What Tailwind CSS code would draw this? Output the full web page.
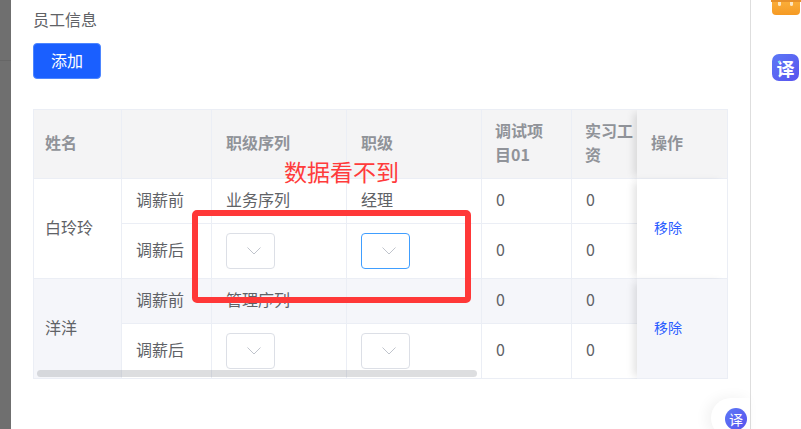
<!DOCTYPE html>
<html lang="zh-CN">
<head>
    <meta charset="UTF-8">
    <title>员工信息</title>
    <script src="https://cdn.jsdelivr.net/npm/@tailwindcss/browser@4"></script>
</head>
<body class="bg-white overflow-hidden font-['Noto_Sans_CJK_SC','Noto_Sans',sans-serif] text-[#606266]">
    <div class="relative flex w-[801px] h-[429px] overflow-hidden">
        <!-- dimmed page behind the drawer -->
        <div class="w-[11px] h-full bg-[#6f6f6f] shrink-0">
            <div class="mt-[60px] h-px bg-[#666666]"></div>
        </div>

        <!-- drawer -->
        <main class="w-[739px] shrink-0 pl-[22px] pt-[7px]">
            <div class="h-6 text-base leading-6">员工信息</div>
            <button class="mt-3 block w-[68px] h-9 pb-[3px] rounded bg-[#1a5fff] border border-[#4d86ff] text-white text-base">添加</button>

            <div class="relative mt-[30px] w-[695px] border-t border-l border-[#ebeef5] overflow-hidden">
                <table class="w-[694px] table-fixed border-separate border-spacing-0 text-base [&_td]:pb-1 [&_th]:pb-1">
                    <colgroup>
                        <col class="w-[88px]"><col class="w-[90px]"><col class="w-[135px]"><col class="w-[135px]"><col class="w-[90px]"><col class="w-[65px]"><col class="w-[91px]">
                    </colgroup>
                    <thead>
                        <tr class="h-[69px] bg-[#f4f4f5] text-[#909399] font-bold leading-6 text-left">
                            <th class="pl-[11px] border-r border-b border-[#ebeef5]">姓名</th>
                            <th class="border-r border-b border-[#ebeef5]"></th>
                            <th class="pl-3.5 border-r border-b border-[#ebeef5]">职级序列</th>
                            <th class="pl-3.5 border-r border-b border-[#ebeef5]">职级</th>
                            <th class="pl-[13px] pr-4 border-r border-b border-[#ebeef5]">调试项目01</th>
                            <th class="pl-[13px] border-b border-[#ebeef5] whitespace-nowrap overflow-hidden font-bold">实习工<br>资</th>
                            <th class="relative pl-3.5 border-r border-b border-[#ebeef5] shadow-[-6px_0_8px_-3px_rgba(0,0,0,0.12)]">操作</th>
                        </tr>
                    </thead>
                    <tbody>
                        <tr class="h-[45px]">
                            <td rowspan="2" class="pl-[11px] border-r border-b border-[#ebeef5]">白玲玲</td>
                            <td class="pl-3.5 border-r border-b border-[#ebeef5]">调薪前</td>
                            <td class="pl-3.5 border-r border-b border-[#ebeef5]">业务序列</td>
                            <td class="pl-3.5 border-r border-b border-[#ebeef5]">经理</td>
                            <td class="pl-3.5 border-r border-b border-[#ebeef5]">0</td>
                            <td class="pl-3.5 border-b border-[#ebeef5]">0</td>
                            <td rowspan="2" class="relative pl-[17px] border-r border-b border-[#ebeef5] text-sm text-[#2a5cff] bg-white shadow-[-6px_0_8px_-3px_rgba(0,0,0,0.12)]">移除</td>
                        </tr>
                        <tr class="h-[55px]">
                            <td class="pl-3.5 border-r border-b border-[#ebeef5]">调薪后</td>
                            <td class="pl-3.5 !pb-0 border-r border-b border-[#ebeef5]">
                                <div class="flex items-center justify-center pl-1.5 w-[49px] h-9 rounded border border-[#dcdfe6]">
                                    <svg class="w-4 h-4 text-[#c0c4cc]" viewBox="0 0 16 16" fill="none" stroke="currentColor" stroke-width="1"><path d="M1.5 4.5 8 11l6.5-6.5"/></svg>
                                </div>
                            </td>
                            <td class="pl-3.5 !pb-0 border-r border-b border-[#ebeef5]">
                                <div class="flex items-center justify-center pl-1.5 w-[49px] h-9 rounded border border-[#409eff]">
                                    <svg class="w-4 h-4 text-[#c0c4cc]" viewBox="0 0 16 16" fill="none" stroke="currentColor" stroke-width="1"><path d="M1.5 4.5 8 11l6.5-6.5"/></svg>
                                </div>
                            </td>
                            <td class="pl-3.5 border-r border-b border-[#ebeef5]">0</td>
                            <td class="pl-3.5 border-b border-[#ebeef5]">0</td>
                        </tr>
                        <tr class="h-[45px] bg-[#f5f6fa]">
                            <td rowspan="2" class="pl-[11px] border-r border-b border-[#ebeef5]">洋洋</td>
                            <td class="pl-3.5 border-r border-b border-[#ebeef5]">调薪前</td>
                            <td class="pl-3.5 border-r border-b border-[#ebeef5]">管理序列</td>
                            <td class="pl-3.5 border-r border-b border-[#ebeef5]"></td>
                            <td class="pl-3.5 border-r border-b border-[#ebeef5]">0</td>
                            <td class="pl-3.5 border-b border-[#ebeef5]">0</td>
                            <td rowspan="2" class="relative pl-[17px] border-r border-b border-[#ebeef5] text-sm text-[#2a5cff] bg-[#f5f6fa] shadow-[-6px_0_8px_-3px_rgba(0,0,0,0.12)]">移除</td>
                        </tr>
                        <tr class="h-[55px]">
                            <td class="pl-3.5 border-r border-b border-[#ebeef5]">调薪后</td>
                            <td class="pl-3.5 !pb-0 border-r border-b border-[#ebeef5]">
                                <div class="flex items-center justify-center pl-1.5 w-[49px] h-9 rounded border border-[#dcdfe6]">
                                    <svg class="w-4 h-4 text-[#c0c4cc]" viewBox="0 0 16 16" fill="none" stroke="currentColor" stroke-width="1"><path d="M1.5 4.5 8 11l6.5-6.5"/></svg>
                                </div>
                            </td>
                            <td class="pl-3.5 !pb-0 border-r border-b border-[#ebeef5]">
                                <div class="flex items-center justify-center pl-1.5 w-[49px] h-9 rounded border border-[#dcdfe6]">
                                    <svg class="w-4 h-4 text-[#c0c4cc]" viewBox="0 0 16 16" fill="none" stroke="currentColor" stroke-width="1"><path d="M1.5 4.5 8 11l6.5-6.5"/></svg>
                                </div>
                            </td>
                            <td class="pl-3.5 border-r border-b border-[#ebeef5]">0</td>
                            <td class="pl-3.5 border-b border-[#ebeef5]">0</td>
                        </tr>
                    </tbody>
                </table>
                <!-- horizontal scrollbar thumb -->
                <div class="absolute left-[3px] top-[260px] w-[440px] h-[7px] rounded bg-[#909399]/30"></div>
            </div>
        </main>

        <!-- right rail -->
        <aside class="flex-1 border-l border-[#dedede] bg-white pl-[21px]">
            <div class="w-7 h-[15px] rounded-b-sm bg-gradient-to-b from-[#fbb03b] to-[#f59a23] relative">
                <div class="absolute -left-px -right-px top-0 h-0.5 bg-[#e8912a]"></div>
                <div class="absolute left-[6px] top-0.5 w-[3px] h-1 bg-[#fde7c2] rounded-b-sm"></div>
                <div class="absolute left-[18px] top-0.5 w-[3px] h-1 bg-[#fde7c2] rounded-b-sm"></div>
            </div>
            <div class="relative mt-[39px] flex items-center justify-center w-[27px] h-[27px] rounded-[7px] bg-gradient-to-br from-[#5b78f6] to-[#5a52ee] text-white text-lg font-bold leading-none">
                译
                <span class="absolute left-[6px] top-[7px] w-[2px] h-[2px] rounded-full bg-[#5fd8f5]"></span>
            </div>
        </aside>

        <!-- floating translate button -->
        <div class="absolute left-[711px] top-[398px] w-[39px] h-[40px] rounded-l-[20px] bg-white shadow-[-4px_0_14px_rgba(0,0,0,0.06)]">
            <div class="absolute left-[14px] top-[10px] flex items-center justify-center w-[22px] h-[22px] rounded-full bg-gradient-to-br from-[#5b78f6] to-[#5a52ee] text-white text-sm leading-none">译</div>
        </div>

        <!-- red annotation over the screenshot -->
        <div class="absolute left-[284px] top-[154px] text-[23px] leading-[34px] text-[#ff3b3b] whitespace-nowrap">数据看不到</div>
        <div class="absolute left-[192px] top-[210px] w-[279px] h-[93px] border-[6px] border-[#ff3838] rounded-[5px]"></div>
    </div>
</body>
</html>
